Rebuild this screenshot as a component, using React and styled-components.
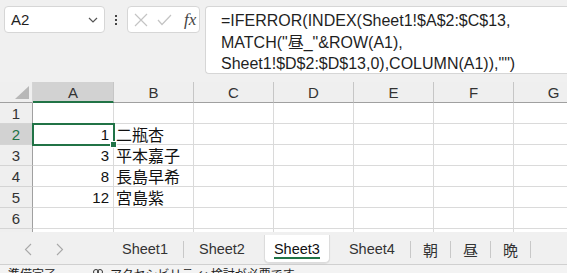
import React from "react";
import styled, {createGlobalStyle} from "styled-components";

const GlobalStyle = createGlobalStyle`
  html, body {
    margin: 0;
    padding: 0;
    background: #f0f0f0;
    overflow: hidden;
  }
`

const green = '#217346'
const sans = '"Liberation Sans", "Noto Sans CJK JP", sans-serif'
const cjk = '"Noto Sans CJK JP", "Liberation Sans", sans-serif'

const columns = ['A', 'B', 'C', 'D', 'E', 'F', 'G']
const rows = [
    {n: 1, a: '', b: ''},
    {n: 2, a: '1', b: '二瓶杏'},
    {n: 3, a: '3', b: '平本嘉子'},
    {n: 4, a: '8', b: '長島早希'},
    {n: 5, a: '12', b: '宮島紫'},
    {n: 6, a: '', b: ''},
    {n: 7, a: '', b: ''},
]
const tabs = ['Sheet1', 'Sheet2', 'Sheet3', 'Sheet4', '朝', '昼', '晩']

const App = () => {
    return (
        <Page>
            <GlobalStyle/>
            <FormulaBar>
                <NameBox>
                    <span>A2</span>
                    <svg width="10" height="6" viewBox="0 0 10 6">
                        <polyline points="1,1 5,5 9,1" fill="none" stroke="#555" strokeWidth="1.2"/>
                    </svg>
                </NameBox>
                <Dots>
                    <i/><i/><i/>
                </Dots>
                <IconBox>
                    <svg width="14" height="14" viewBox="0 0 14 14">
                        <path d="M1 1 L13 13 M13 1 L1 13" stroke="#c4c4c4" strokeWidth="1.2"/>
                    </svg>
                    <svg width="15" height="12" viewBox="0 0 15 12">
                        <polyline points="1,6 5,10.5 14,1" fill="none" stroke="#c4c4c4" strokeWidth="1.2"/>
                    </svg>
                    <Fx>fx</Fx>
                </IconBox>
                <FormulaBox>
                    =IFERROR(INDEX(Sheet1!$A$2:$C$13,<br/>
                    MATCH("昼_"&amp;ROW(A1),<br/>
                    Sheet1!$D$2:$D$13,0),COLUMN(A1)),"")
                </FormulaBox>
            </FormulaBar>

            <Grid>
                <Corner>
                    <svg width="14" height="13" viewBox="0 0 14 13">
                        <polygon points="14,0 14,13 0,13" fill="#b8b8b8"/>
                    </svg>
                </Corner>
                {columns.map(c => (
                    <ColHead key={c} $active={c === 'A'}>{c}</ColHead>
                ))}
                {rows.map(r => (
                    <React.Fragment key={r.n}>
                        {/* row 7 is only a sliver under the tab bar, its number is hidden */}
                        <RowHead $active={r.n === 2}>{r.n < 7 ? r.n : ''}</RowHead>
                        <Cell $num $selected={r.n === 2}>
                            {r.a}
                            {r.n === 2 && <Handle/>}
                        </Cell>
                        <Cell $jp>{r.b}</Cell>
                        {columns.slice(2).map(c => <Cell key={c}/>)}
                    </React.Fragment>
                ))}
            </Grid>

            <TabBar>
                <Arrows>
                    <svg width="8" height="13" viewBox="0 0 8 13">
                        <polyline points="7,1 1.5,6.5 7,12" fill="none" stroke="#a8a8a8" strokeWidth="1.1"/>
                    </svg>
                    <svg width="8" height="13" viewBox="0 0 8 13">
                        <polyline points="1,1 6.5,6.5 1,12" fill="none" stroke="#a8a8a8" strokeWidth="1.1"/>
                    </svg>
                </Arrows>
                {tabs.map((t, i) => (
                    <React.Fragment key={t}>
                        {i > 0 && tabs[i - 1] !== 'Sheet3' && t !== 'Sheet3' && <Sep/>}
                        <Tab $active={t === 'Sheet3'} $jp={t.length === 1}>
                            <span>{t}</span>
                        </Tab>
                    </React.Fragment>
                ))}
                <Sep/>
            </TabBar>

            <StatusBar>
                <span>準備完了</span>
                <svg width="12" height="12" viewBox="0 0 12 12">
                    <circle cx="4" cy="4" r="2.5" fill="none" stroke="#333"/>
                    <circle cx="8" cy="4" r="2.5" fill="none" stroke="#333"/>
                </svg>
                <span>アクセシビリティ: 検討が必要です</span>
            </StatusBar>
        </Page>
    )
}

const Page = styled.div`
  width: 567px;
  height: 273px;
  display: flex;
  flex-direction: column;
  overflow: hidden;
  background: #f0f0f0;
`

const FormulaBar = styled.div`
  display: flex;
  align-items: flex-start;
  padding: 6px 0 0 4px;
  height: 76px;
  box-sizing: border-box;
  flex-shrink: 0;
`

const NameBox = styled.div`
  width: 101px;
  height: 27px;
  box-sizing: border-box;
  background: #fff;
  border: 1px solid #d6d6d6;
  border-radius: 4px;
  display: flex;
  align-items: center;
  justify-content: space-between;
  padding: 0 6px 0 6px;
  font-family: ${sans};
  font-size: 15px;
  color: #1f1f1f;
`

const Dots = styled.div`
  width: 22px;
  height: 27px;
  display: flex;
  flex-direction: column;
  align-items: center;
  justify-content: center;
  gap: 2px;

  i {
    display: block;
    width: 2px;
    height: 2px;
    background: #444;
  }
`

const IconBox = styled.div`
  width: 73px;
  height: 27px;
  box-sizing: border-box;
  background: #fff;
  border: 1px solid #d6d6d6;
  border-radius: 4px;
  display: flex;
  align-items: center;
  gap: 9px;
  padding-left: 6px;
`

const Fx = styled.span`
  font-family: "Liberation Serif", serif;
  font-style: italic;
  font-size: 17px;
  color: #444;
  margin-left: 3px;
`

const FormulaBox = styled.div`
  flex: 1;
  margin-left: 5px;
  height: 68px;
  box-sizing: border-box;
  background: #fff;
  border: 1px solid #d6d6d6;
  border-right: none;
  border-radius: 4px 0 0 4px;
  padding: 3px 0 0 15px;
  font-family: ${sans};
  font-size: 16px;
  line-height: 21.5px;
  color: #1f1f1f;
  white-space: nowrap;
`

const Grid = styled.div`
  display: grid;
  grid-template-columns: 33px 81px repeat(6, 80px);
  grid-auto-rows: 21px;
  margin-top: 6px;
  background: #fff;
  height: 150px;
  overflow: hidden;
  flex-shrink: 0;
  font-family: ${sans};
  line-height: 1;
`

const Corner = styled.div`
  background: #efefef;
  border-right: 1px solid #d4d4d4;
  border-bottom: 1px solid #a0a0a0;
  box-sizing: border-box;
  display: flex;
  align-items: flex-end;
  justify-content: flex-end;
  padding: 0 3px 3px 0;
`

const ColHead = styled.div`
  background: ${p => p.$active ? '#d2d2d2' : '#efefef'};
  border-right: 1px solid #c6c6c6;
  border-bottom: ${p => p.$active ? `2px solid ${green}` : '1px solid #a0a0a0'};
  box-sizing: border-box;
  display: flex;
  align-items: center;
  justify-content: center;
  font-size: 15px;
  color: #333;
  padding-top: ${p => p.$active ? '1px' : '0'};
`

const RowHead = styled.div`
  background: ${p => p.$active ? '#d2d2d2' : '#efefef'};
  border-right: 1px solid #a0a0a0;
  border-bottom: 1px solid #d4d4d4;
  box-sizing: border-box;
  display: flex;
  align-items: center;
  justify-content: center;
  font-size: 15px;
  color: ${p => p.$active ? green : '#333'};
`

const Cell = styled.div`
  position: relative;
  border-right: 1px solid #dadada;
  border-bottom: 1px solid #dadada;
  box-sizing: border-box;
  display: flex;
  align-items: center;
  justify-content: ${p => p.$num ? 'flex-end' : 'flex-start'};
  padding: ${p => p.$num ? '0 4px 0 0' : '0 0 0 2px'};
  font-family: ${p => p.$jp ? cjk : sans};
  font-size: ${p => p.$jp ? '16px' : '15px'};
  color: #111;
  ${p => p.$selected && `
    outline: 2px solid ${green};
    outline-offset: -1px;
    z-index: 1;
  `}
`

const Handle = styled.span`
  position: absolute;
  right: -4px;
  bottom: -4px;
  width: 5px;
  height: 5px;
  background: ${green};
  border: 1px solid #fff;
`

const TabBar = styled.div`
  display: flex;
  align-items: center;
  height: 33px;
  box-sizing: border-box;
  padding-top: 2px;
  flex-shrink: 0;
  border-bottom: 1px solid #d0d0d0;
  font-family: ${sans};
`

const Arrows = styled.div`
  width: 107px;
  display: flex;
  align-items: center;
  gap: 24px;
  padding-left: 24px;
  box-sizing: border-box;
`

const Sep = styled.div`
  width: 1px;
  height: 17px;
  background: #c8c8c8;
`

const Tab = styled.div`
  height: 28px;
  box-sizing: border-box;
  display: flex;
  align-items: center;
  padding: ${p => p.$jp ? '0 12px' : '0 15px'};
  font-family: ${p => p.$jp ? cjk : sans};
  font-size: ${p => p.$jp ? '15px' : '14.5px'};
  color: #333;
  ${p => p.$active && `
    background: #fff;
    color: #111;
    margin: 0 4px;
    padding: 0 9px;
    border: 1px solid #dcdcdc;
    border-top: none;
    border-radius: 0 0 5px 5px;
    box-shadow: 0 1px 1px rgba(0,0,0,0.08);
    span {
      border-bottom: 2px solid ${green};
      padding-top: 2px;
    }
  `}
`

const StatusBar = styled.div`
  flex: 1;
  display: flex;
  align-items: flex-start;
  gap: 6px;
  padding: 1px 0 0 8px;
  font-family: ${cjk};
  font-size: 12px;
  line-height: 16px;
  color: #222;
  background: #f3f3f3;

  span:first-child {
    margin-right: 30px;
  }

  svg {
    margin-top: 2px;
  }
`

export default App
